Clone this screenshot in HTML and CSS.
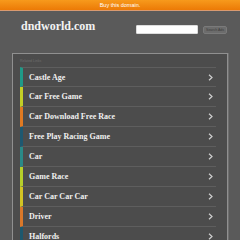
FILE: index.html
```html
<!DOCTYPE html>
<html>
<head>
<meta charset="utf-8">
<link rel="stylesheet" href="styles.css">
</head>
<body>
<div class="topbar">Buy this domain.</div>
<div class="header">
  <div class="logo">dndworld.com</div>
  <div class="search">
    <div class="search-input"></div>
    <div class="search-btn">Search Ads</div>
  </div>
</div>
<div class="panel">
  <div class="panel-title">Related Links</div>
  <ul class="links">
    <li class="c1"><span>Castle Age</span><svg class="chev" width="5" height="7" viewBox="0 0 5 7"><polyline points="1,0.8 4,3.5 1,6.2" fill="none" stroke="#d0d0d0" stroke-width="1.2"/></svg></li>
    <li class="c2"><span>Car Free Game</span><svg class="chev" width="5" height="7" viewBox="0 0 5 7"><polyline points="1,0.8 4,3.5 1,6.2" fill="none" stroke="#d0d0d0" stroke-width="1.2"/></svg></li>
    <li class="c3"><span>Car Download Free Race</span><svg class="chev" width="5" height="7" viewBox="0 0 5 7"><polyline points="1,0.8 4,3.5 1,6.2" fill="none" stroke="#d0d0d0" stroke-width="1.2"/></svg></li>
    <li class="c4"><span>Free Play Racing Game</span><svg class="chev" width="5" height="7" viewBox="0 0 5 7"><polyline points="1,0.8 4,3.5 1,6.2" fill="none" stroke="#d0d0d0" stroke-width="1.2"/></svg></li>
    <li class="c5"><span>Car</span><svg class="chev" width="5" height="7" viewBox="0 0 5 7"><polyline points="1,0.8 4,3.5 1,6.2" fill="none" stroke="#d0d0d0" stroke-width="1.2"/></svg></li>
    <li class="c6"><span>Game Race</span><svg class="chev" width="5" height="7" viewBox="0 0 5 7"><polyline points="1,0.8 4,3.5 1,6.2" fill="none" stroke="#d0d0d0" stroke-width="1.2"/></svg></li>
    <li class="c7"><span>Car Car Car Car</span><svg class="chev" width="5" height="7" viewBox="0 0 5 7"><polyline points="1,0.8 4,3.5 1,6.2" fill="none" stroke="#d0d0d0" stroke-width="1.2"/></svg></li>
    <li class="c8"><span>Driver</span><svg class="chev" width="5" height="7" viewBox="0 0 5 7"><polyline points="1,0.8 4,3.5 1,6.2" fill="none" stroke="#d0d0d0" stroke-width="1.2"/></svg></li>
    <li class="c9"><span>Halfords</span><svg class="chev" width="5" height="7" viewBox="0 0 5 7"><polyline points="1,0.8 4,3.5 1,6.2" fill="none" stroke="#d0d0d0" stroke-width="1.2"/></svg></li>
  </ul>
</div>
</body>
</html>
```
FILE: styles.css
```css
html, body {
  margin: 0;
  padding: 0;
  background: #5a5a5a;
  overflow: hidden;
}
body {
  width: 240px;
  height: 240px;
}
.topbar {
  height: 10px;
  line-height: 10px;
  background: linear-gradient(#f79a1c, #ec7a06);
  border-bottom: 1px solid #d99a70;
  color: #fff;
  text-align: center;
  font-family: "Liberation Sans", Arial, sans-serif;
  font-size: 5.5px;
}
.header {
  display: flex;
  justify-content: space-between;
  align-items: flex-start;
  padding: 8px 13px 0 21px;
  height: 34px;
}
.logo {
  font-family: "Liberation Serif", "Times New Roman", serif;
  font-weight: bold;
  font-size: 12px;
  color: #f2f2f2;
  line-height: 14px;
}
.search {
  display: flex;
  align-items: center;
  gap: 5px;
  margin-top: 6px;
}
.search-input {
  width: 60px;
  height: 7px;
  background: #fff;
  border: 0.5px solid #ddd;
  border-radius: 1px;
}
.search-btn {
  width: 22px;
  height: 6px;
  line-height: 6px;
  background: #6c6c6c;
  border: 1px solid #7a7a7a;
  border-radius: 2px;
  color: #3a3a3a;
  font-family: "Liberation Sans", Arial, sans-serif;
  font-size: 3.5px;
  text-align: center;
}
.panel {
  margin: 0 12px;
  background: #4c4c4c;
  border: 1px solid #909090;
  border-bottom: none;
  box-shadow: 1px 0 0 #6e6e6e;
  padding: 4px 11px 0 7px;
  height: 186px;
  overflow: hidden;
}
.panel-title {
  font-family: "Liberation Sans", Arial, sans-serif;
  font-size: 3.5px;
  color: #6e6e6e;
  height: 9px;
  line-height: 6px;
}
.links {
  list-style: none;
  margin: 0;
  padding: 0;
}
.links li {
  display: flex;
  align-items: center;
  justify-content: space-between;
  height: 19px;
  border-left: 3px solid #2a9a8a;
  border-bottom: 1px solid #5e5e5e;
  padding: 0 3px 0 6px;
  font-family: "Liberation Serif", "Times New Roman", serif;
  font-weight: bold;
  font-size: 8px;
  color: #f0f0f0;
}
.links li.c1 { border-left-color: #1f9a88; border-top: 1px solid #5e5e5e; height: 18px; }
.links li.c2 { border-left-color: #c2cf26; }
.links li.c3 { border-left-color: #e07a22; }
.links li.c4 { border-left-color: #1e5870; }
.links li.c5 { border-left-color: #2a8a88; }
.links li.c6 { border-left-color: #b6cf2a; }
.links li.c7 { border-left-color: #d2c424; }
.links li.c8 { border-left-color: #d9782a; }
.links li.c9 { border-left-color: #1d586e; }
.chev {
  display: block;
}
```
